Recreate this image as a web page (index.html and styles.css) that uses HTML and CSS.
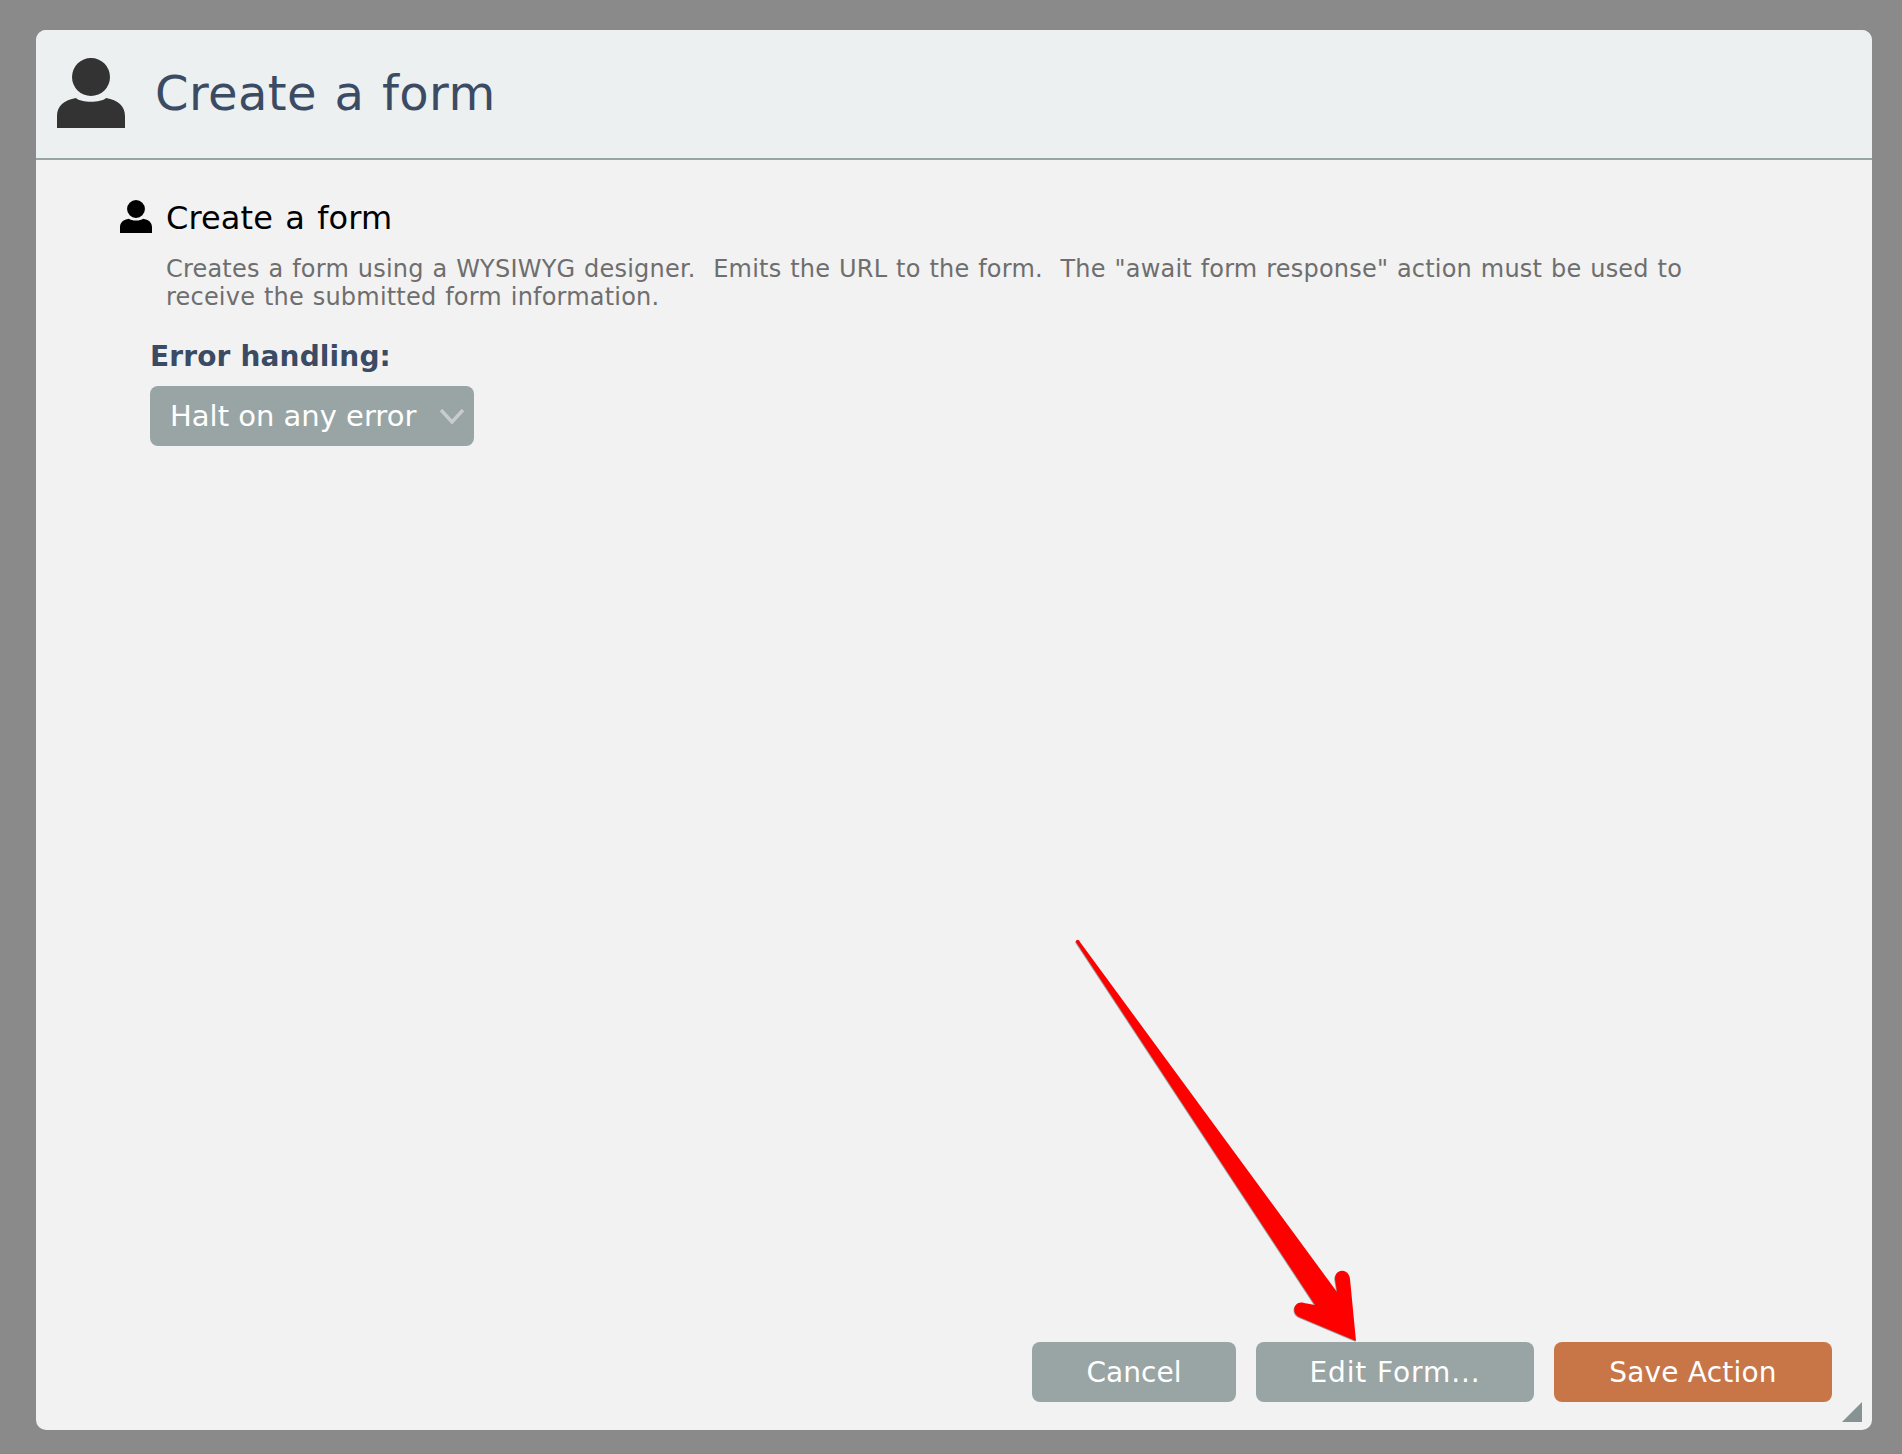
FILE: index.html
```html
<!DOCTYPE html>
<html lang="en">
<head>
<meta charset="utf-8">
<title>Create a form</title>
<link rel="stylesheet" href="styles.css">
</head>
<body>
<div class="modal">
  <header class="modal-header">
    <svg class="header-icon" viewBox="0 0 68 70" aria-hidden="true"><path d="M34 0a19 19 0 1 1 0 38a19 19 0 0 1 0-38zM0 70V58C0 48 7 42 19 40C24 45 44 45 49 40C61 42 68 48 68 58V70z"/></svg>
    <h1 class="modal-title">Create a form</h1>
  </header>
  <main class="modal-body">
    <div class="action-row">
      <svg class="action-icon" viewBox="0 0 68 70" aria-hidden="true"><path d="M34 0a19 19 0 1 1 0 38a19 19 0 0 1 0-38zM0 70V58C0 48 7 42 19 40C24 45 44 45 49 40C61 42 68 48 68 58V70z"/></svg>
      <div class="action-text">
        <h2 class="action-name">Create a form</h2>
        <p class="action-desc">Creates a form using a WYSIWYG designer.&nbsp; Emits the URL to the form.&nbsp; The "await form response" action must be used to receive the submitted form information.</p>
      </div>
    </div>
    <div class="field">
      <div class="field-label">Error handling:</div>
      <div class="select">
        <span>Halt on any error</span>
        <svg class="chevron" viewBox="0 0 24 15" aria-hidden="true"><path d="M1 1L12 13L23 1"/></svg>
      </div>
    </div>
  </main>
  <footer class="modal-footer">
    <button class="btn">Cancel</button>
    <button class="btn btn-edit">Edit Form...</button>
    <button class="btn btn-save">Save Action</button>
  </footer>
  <div class="grip"></div>
</div>
<svg class="arrow" viewBox="0 0 1902 1454" aria-hidden="true">
  <path class="arrow-shadow" d="M1076 942C1076 939 1079 939 1080 942L1337 1292L1335 1279C1335 1268 1349 1268 1350 1279L1356 1341L1299 1317C1290 1312 1295 1300 1304 1303L1315 1305z"/>
  <path class="arrow-fill" d="M1076 942C1076 939 1079 939 1080 942L1337 1292L1335 1279C1335 1268 1349 1268 1350 1279L1356 1341L1299 1317C1290 1312 1295 1300 1304 1303L1315 1305z"/>
</svg>
</body>
</html>
```
FILE: styles.css
```css
* { box-sizing: border-box; }
html, body { height: 100%; }
body {
  margin: 0;
  padding: 30px 30px 24px 36px;
  background: #8a8a8a;
  font-family: "DejaVu Sans", Verdana, sans-serif;
  overflow: hidden;
  position: relative;
}
.modal {
  position: relative;
  height: 100%;
  display: flex;
  flex-direction: column;
  background: #f2f2f2;
  border-radius: 10px;
  overflow: hidden;
}
.modal-header {
  height: 130px;
  flex: none;
  display: flex;
  align-items: center;
  gap: 30px;
  padding: 0 0 2px 21px;
  background: #ecf0f1;
  border-bottom: 2px solid #99a5a5;
}
.header-icon { width: 68px; height: 70px; fill: #333; flex: none; }
.modal-title {
  margin: 0;
  font-size: 48px;
  font-weight: 400;
  letter-spacing: 0.4px;
  word-spacing: 2px;
  color: #3a4b63;
  line-height: 1;
}
.modal-body { flex: 1; padding: 41px 0 0 84px; }
.action-row { display: flex; gap: 14px; }
.action-icon { width: 32px; height: 33px; margin-top: -1px; fill: #000; flex: none; }
.action-name {
  margin: 0 0 20px;
  font-size: 32px;
  font-weight: 400;
  letter-spacing: 0.1px;
  word-spacing: 2px;
  line-height: 34px;
  color: #000;
}
.action-desc {
  margin: 0;
  width: 1560px;
  font-size: 24px;
  letter-spacing: 0.2px;
  word-spacing: 1px;
  line-height: 28px;
  color: #6e6e6e;
}
.field { margin: 29px 0 0 30px; }
.field-label {
  font-size: 28px;
  font-weight: 700;
  letter-spacing: 0.15px;
  line-height: 34px;
  color: #3a4b63;
}
.select {
  position: relative;
  width: 324px;
  height: 60px;
  margin-top: 12px;
  padding-left: 20px;
  display: flex;
  align-items: center;
  background: #99a5a5;
  border-radius: 8px;
  color: #fff;
  font-size: 29px;
}
.chevron {
  position: absolute;
  right: 10px;
  top: 23px;
  width: 24px;
  height: 15px;
  fill: none;
  stroke: #c8cccc;
  stroke-width: 3.5;
}
.modal-footer {
  flex: none;
  display: flex;
  justify-content: flex-end;
  gap: 20px;
  padding: 0 40px 28px 0;
}
.btn {
  width: 204px;
  height: 60px;
  padding: 0;
  border: 0;
  border-radius: 8px;
  background: #99a5a5;
  color: #fff;
  font: 400 28px "DejaVu Sans", Verdana, sans-serif;
}
.btn-edit { width: 278px; letter-spacing: 0.9px; }
.btn-save { width: 278px; background: #c87647; letter-spacing: 0.2px; }
.grip {
  position: absolute;
  right: 10px;
  bottom: 8px;
  width: 20px;
  height: 20px;
  background: #859393;
  clip-path: polygon(100% 0, 100% 100%, 0 100%);
}
.arrow {
  position: absolute;
  left: 0;
  top: 0;
  width: 1902px;
  height: 1454px;
  pointer-events: none;
}
.arrow-shadow { fill: #999; transform: translate(-0.7px, 0.7px); }
.arrow-fill { fill: #f00; }
```
